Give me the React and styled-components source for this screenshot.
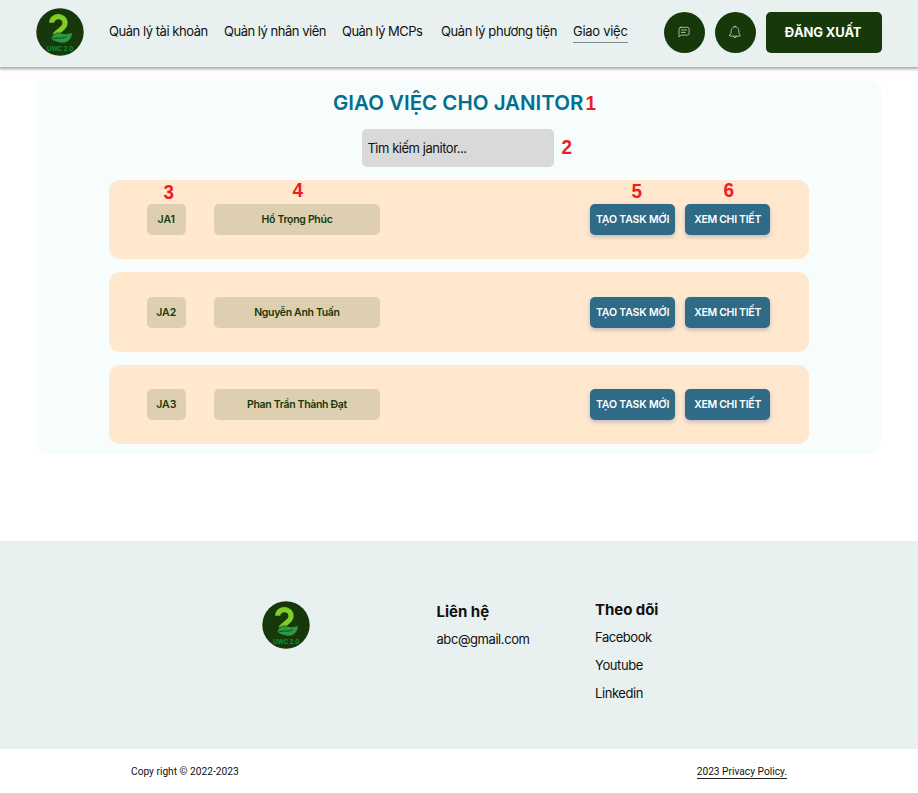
import React from 'react';
import styled, { createGlobalStyle } from 'styled-components';

const Global = createGlobalStyle`
  * { box-sizing: border-box; }
  body { margin: 0; background: #fff; color: #111; font-family: Inter, "Noto Sans", sans-serif; }
  h1, h2, p { margin: 0; }
`;
const Page = styled.div`width: 918px; height: 793px; overflow: hidden; display: flex; flex-direction: column;`;
const Header = styled.header`
  height: 67px; flex: none; background: #e8f1f0; display: flex; align-items: flex-start;
  padding: 8px 36px 0; box-shadow: 0 1px 3px 1px rgba(0,0,0,.36);
`;
const LogoSvg = styled.svg`width: 48px; height: 48px; display: block; flex: none;`;
const Nav = styled.nav`display: flex; flex: none; margin: 14px 0 0 25px; width: 554.5px;`;
const NavLink = styled.a`
  font-size: 13px; line-height: 19px; height: 21px; white-space: nowrap; flex: none;
  width: ${p => p.$w}px; margin-right: ${p => p.$gap}px; letter-spacing: ${p => p.$ls}px;
  border-bottom: ${p => (p.$active ? '1.5px solid #7f8988' : '0')};
`;
const RoundButton = styled.button`
  width: 41px; height: 41px; margin: 3.5px 10.4px 0 0; padding: 0; border: 0; border-radius: 50%;
  background: #17380b; display: grid; place-items: center; flex: none;
  svg { width: 14px; height: 14px; stroke: #c9d6c4; fill: none; stroke-width: .8; stroke-linecap: round; stroke-linejoin: round; }
`;
const LogoutButton = styled.button`
  width: 115.5px; height: 41px; margin-top: 3.5px; padding: 0 2px 0 0; border: 0; border-radius: 5px; flex: none;
  background: #17380b; color: #fff; font: 700 13px Inter, sans-serif; letter-spacing: -.15px;
`;
const Panel = styled.main`
  width: 845px; height: 374px; margin: 13px 0 0 36px; padding: 9px 73px 0; flex: none;
  background: #f7fdfd; border-radius: 11px; display: flex; flex-direction: column;
`;
const TitleRow = styled.div`display: flex; height: 28px; margin-left: 224px; align-items: center;`;
const Title = styled.h1`width: 252px; flex: none; white-space: nowrap; font-size: 20.5px; line-height: 28px; font-weight: 600; letter-spacing: ${p => p.$ls}px; color: #036e8d;`;
const Marker = styled.span`font: 700 21px/20px "Liberation Sans", sans-serif; color: #ee1c24; display: inline-block; transform: scaleX(.9);`;
const SearchRow = styled.div`display: flex; align-items: center; gap: 7px; margin: 12px 0 0 253.4px; ${Marker} { margin-top: -2px; }`;
const Search = styled.input`
  width: 192px; height: 38px; border: 0; border-radius: 5px; background: #d9d9d9; padding: 0 5px;
  font: 400 13px Inter, sans-serif; letter-spacing: -.46px;
  &::placeholder { color: #111; opacity: 1; }
`;
const Cards = styled.div`display: flex; flex-direction: column; gap: 13px; margin-top: 13px;`;
const Card = styled.section`
  width: 699.5px; height: 79.4px; border-radius: 11px; background: #ffe8cd; padding: 24.4px 38px 0; display: flex;
`;
const Cell = styled.div`position: relative; flex: none; margin-left: ${p => p.$ml || 0}px; width: ${p => p.$w}px;`;
const Tag = styled.div`
  height: 31px; border-radius: 5px; background: #ddcfaf; color: #17380b; display: grid; place-items: center;
  font-size: 10.5px; font-weight: 600; letter-spacing: ${p => p.$ls || 0}px;
`;
const Action = styled.button`
  width: 100%; height: 31px; border: 0; padding: 0; border-radius: 5px; background: #2f6b87; color: #fff; display: block;
  font: 600 10.5px Inter, sans-serif; letter-spacing: ${p => p.$ls}px; white-space: nowrap; box-shadow: 0 2px 4px rgba(80,90,170,.35);
`;
const Note = styled(Marker)`position: absolute; left: ${p => p.$x}px; top: ${p => p.$y}px;`;
const Footer = styled.footer`
  margin-top: 87px; height: 208px; flex: none; background: #e8f1f0; padding: 60px 0 0 262px; display: flex; align-items: flex-start;
`;
const Column = styled.div`margin-left: ${p => p.$ml}px; margin-top: ${p => p.$mt}px; width: ${p => p.$w}px;`;
const FootTitle = styled.h2`font-size: 15px; line-height: 20px; font-weight: 700; letter-spacing: ${p => p.$ls}px; white-space: nowrap;`;
const FootLink = styled.p`font-size: 13px; line-height: 18px; margin-top: ${p => p.$mt}px; letter-spacing: ${p => p.$ls}px; white-space: nowrap;`;
const Legal = styled.div`
  display: flex; justify-content: space-between; padding: 15px 131px 0; font-size: 10.2px; line-height: 15px;
  font-family: Roboto, sans-serif;
`;
const Copy = styled.span`letter-spacing: 0;`;
const Policy = styled.a`border-bottom: 1px solid #222; letter-spacing: 0; padding-top: 1px; height: 15px; line-height: 14px;`;

const Logo = () => (
  <LogoSvg viewBox="0 0 48 48">
    <circle cx="24" cy="24" r="23.7" fill="#17380b" />
    <path d="M15.7 14.8C15.9 6.5 29.4 6.6 29 15.5C28.8 20.5 22 22.5 18.8 27" fill="none" stroke="#82cc27" strokeWidth="5.2" />
    <path d="M15.2 31.5C16.5 24.5 21.5 24.2 26 25.4C30 26.4 33 25.8 36.3 24.6C36 31.5 31.5 35.6 25.5 34.9C23 34.6 21.5 34.2 19.8 33.6C17.5 32.8 16.2 32.4 15.2 31.5Z" fill="#2b9a43" stroke="#17380b" strokeWidth=".5" />
    <path d="M15.5 31.8C20 28.5 25.5 31.8 31 28.5" fill="none" stroke="#17380b" strokeWidth=".8" />
    <text x="11" y="42.7" textLength="26.2" fill="#159447" fontFamily="Roboto, sans-serif" fontSize="7" fontWeight="500">UWC 2.0</text>
  </LogoSvg>
);

const links = [
  ['Quản lý tài khoản', 99, 16, -0.46], ['Quản lý nhân viên', 102, 16, -0.48], ['Quản lý MCPs', 81, 18, -0.54],
  ['Quản lý phương tiện', 117, 15, -0.39], ['Giao việc', 55, 0, -0.28],
];
const people = [
  { id: 'JA1', name: 'Hồ Trọng Phúc', notes: true, ls: -0.3 },
  { id: 'JA2', name: 'Nguyễn Anh Tuấn', ls: -0.33 },
  { id: 'JA3', name: 'Phan Trần Thành Đạt', ls: -0.33 },
];

export default function App() {
  return (
    <Page>
      <Global />
      <Header>
        <Logo />
        <Nav>{links.map(([t, w, g, ls], i) => <NavLink key={t} $w={w} $gap={g} $ls={ls} $active={i === 4}>{t}</NavLink>)}</Nav>
        <RoundButton aria-label="Tin nhắn">
          <svg viewBox="0 0 14 14"><path d="M3.8 2.3h6.5a1.8 1.8 0 0 1 1.8 1.8v4.2a1.8 1.8 0 0 1-1.8 1.8H4.2L2 11.9V4.1a1.8 1.8 0 0 1 1.8-1.8ZM4.4 5h5.2M4.4 7.4h3.8" /></svg>
        </RoundButton>
        <RoundButton aria-label="Thông báo">
          <svg viewBox="0 0 14 14"><path d="M1.8 10.2c2-1.8.9-3.8 1.7-5.8C4.1 2.8 5.2 1.8 7 1.8s2.9 1 3.5 2.6c.8 2-.3 4 1.7 5.8.4.5 0 .9-.6.9H2.4c-.6 0-1-.4-.6-.9ZM5.4 11.5c.3 1.6 2.9 1.6 3.2 0M6.2 1.7c0-1 1.6-1 1.6 0" /></svg>
        </RoundButton>
        <LogoutButton>ĐĂNG XUẤT</LogoutButton>
      </Header>
      <Panel>
        <TitleRow><Title $ls={0}>GIAO VIỆC CHO JANITOR</Title><Marker>1</Marker></TitleRow>
        <SearchRow><Search placeholder="Tìm kiếm janitor..." /><Marker>2</Marker></SearchRow>
        <Cards>
          {people.map(p => (
            <Card key={p.id}>
              <Cell $w={38.5}><Tag>{p.id}</Tag>{p.notes && <Note $x={15.5} $y={-22}>3</Note>}</Cell>
              <Cell $w={166.5} $ml={28.2}><Tag $ls={p.ls}>{p.name}</Tag>{p.notes && <Note $x={78.5} $y={-24}>4</Note>}</Cell>
              <Cell $w={85} $ml={209.9}><Action $ls={-0.15}>TẠO TASK MỚI</Action>{p.notes && <Note $x={40.5} $y={-23}>5</Note>}</Cell>
              <Cell $w={85} $ml={10}><Action $ls={-0.3}>XEM CHI TIẾT</Action>{p.notes && <Note $x={38} $y={-24}>6</Note>}</Cell>
            </Card>
          ))}
        </Cards>
      </Panel>
      <Footer>
        <Logo />
        <Column $ml={126.5} $mt={1} $w={158.5}>
          <FootTitle $ls={0}>Liên hệ</FootTitle>
          <FootLink $mt={8} $ls={-0.43}>abc@gmail.com</FootLink>
        </Column>
        <Column $ml={0} $mt={-1} $w={120}>
          <FootTitle $ls={-0.05}>Theo dõi</FootTitle>
          <FootLink $mt={8} $ls={-0.45}>Facebook</FootLink>
          <FootLink $mt={10} $ls={-0.4}>Youtube</FootLink>
          <FootLink $mt={10} $ls={-0.42}>Linkedin</FootLink>
        </Column>
      </Footer>
      <Legal><Copy>Copy right © 2022-2023</Copy><Policy>2023 Privacy Policy.</Policy></Legal>
    </Page>
  );
}
